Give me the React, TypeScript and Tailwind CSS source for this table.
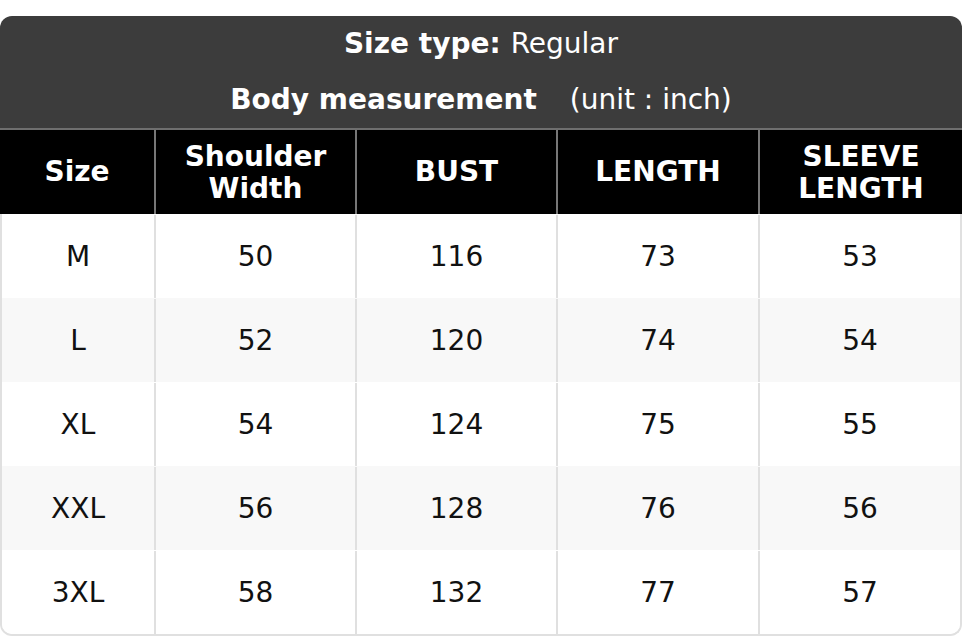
import React from 'react';

const rows = [
  { size: 'M', shoulder: 50, bust: 116, length: 73, sleeve: 53 },
  { size: 'L', shoulder: 52, bust: 120, length: 74, sleeve: 54 },
  { size: 'XL', shoulder: 54, bust: 124, length: 75, sleeve: 55 },
  { size: 'XXL', shoulder: 56, bust: 128, length: 76, sleeve: 56 },
  { size: '3XL', shoulder: 58, bust: 132, length: 77, sleeve: 57 },
];

const App = () => {
  return (
    <div className="w-[962px] bg-white pt-[16px] font-['DejaVu_Sans',sans-serif]">
      <div className="overflow-hidden rounded-t-[12px]">
        {/* Title block */}
        <div className="bg-[#3c3c3c] text-white text-[28px] border-b-2 border-[#6f6f6f]">
          <div className="h-[56px] flex items-center justify-center">
            <span className="font-bold">Size type:</span>
            <span className="ml-[10px]">Regular</span>
          </div>
          <div className="h-[56px] flex items-center justify-center">
            <span className="font-bold">Body measurement</span>
            <span className="ml-[33px]">(unit : inch)</span>
          </div>
        </div>

        {/* Column header */}
        <div className="grid grid-cols-[154px_201px_201px_202px_1fr] h-[84px] bg-black text-white text-[28px] font-bold leading-[32px] text-center">
          <div className="flex items-center justify-center">Size</div>
          <div className="flex items-center justify-center border-l-2 border-[#777] pt-[1px]">Shoulder<br />Width</div>
          <div className="flex items-center justify-center border-l-2 border-[#777]">BUST</div>
          <div className="flex items-center justify-center border-l-2 border-[#777]">LENGTH</div>
          <div className="flex items-center justify-center border-l-2 border-[#777] pt-[1px]">SLEEVE<br />LENGTH</div>
        </div>
      </div>

      {/* Body rows */}
      <div className="border-x-2 border-b-2 border-[#e0e0e0] rounded-b-[12px] overflow-hidden">
        {rows.map((r, i) => (
          <div
            key={r.size}
            className={`grid grid-cols-[152px_201px_201px_202px_1fr] h-[84px] text-[28px] text-[#111] text-center pt-[1px] ${i % 2 === 1 ? 'bg-[#f8f8f8]' : 'bg-white'}`}
          >
            <div className="flex items-center justify-center">{r.size}</div>
            <div className="flex items-center justify-center border-l-2 border-[#e0e0e0]">{r.shoulder}</div>
            <div className="flex items-center justify-center border-l-2 border-[#e0e0e0]">{r.bust}</div>
            <div className="flex items-center justify-center border-l-2 border-[#e0e0e0]">{r.length}</div>
            <div className="flex items-center justify-center border-l-2 border-[#e0e0e0]">{r.sleeve}</div>
          </div>
        ))}
      </div>
    </div>
  );
};

export default App;
